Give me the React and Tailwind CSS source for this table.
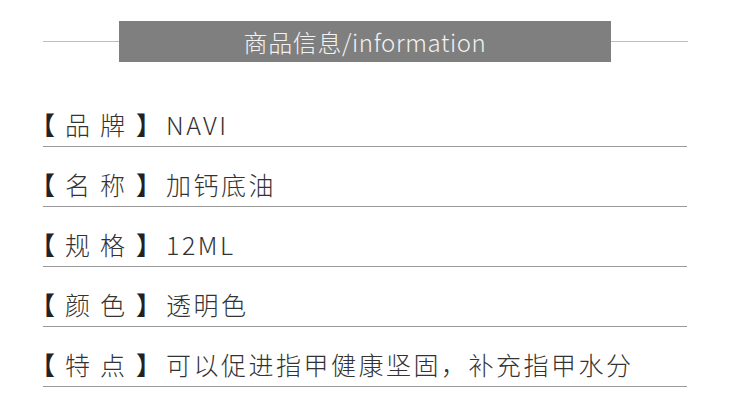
import React from "react";

const rows = [
  { label: ["品", "牌"], value: "NAVI" },
  { label: ["名", "称"], value: "加钙底油" },
  { label: ["规", "格"], value: "12ML" },
  { label: ["颜", "色"], value: "透明色" },
  { label: ["特", "点"], value: "可以促进指甲健康坚固，补充指甲水分" },
];

const App = () => {
  return (
    <div
      className="w-[730px] h-[404px] bg-white overflow-hidden"
      style={{ fontFamily: '"Noto Sans CJK SC", "Noto Sans", sans-serif' }}
    >
      {/* Title bar */}
      <div className="flex items-center pt-[21px] pl-[43px]">
        <div className="w-[76px] h-px bg-[#bdbdbd]" />
        <div className="w-[492px] h-[41px] bg-[#7f7f7f] flex items-center justify-center text-[24px] font-light text-[#f2f2f2] tracking-[0.6px]">
          商品信息/information
        </div>
        <div className="w-[77px] h-px bg-[#bdbdbd]" />
      </div>

      {/* Info rows */}
      <div className="mx-[43px] mt-[25px]">
        {rows.map((r) => (
          <div
            key={r.value}
            className="h-[60px] flex items-end pb-[9px] border-b border-[#9a9a9a] text-[25px] font-light text-[#333] leading-none"
          >
            <div className="flex items-center shrink-0">
              <span className="font-bold text-[#222] ml-[-13px]">【</span>
              <span className="ml-[10px]">{r.label[0]}</span>
              <span className="ml-[10px]">{r.label[1]}</span>
              <span className="font-bold text-[#222] ml-[11px]">】</span>
            </div>
            <span className="ml-[5px] tracking-[2.5px]">{r.value}</span>
          </div>
        ))}
      </div>
    </div>
  );
};

export default App;
